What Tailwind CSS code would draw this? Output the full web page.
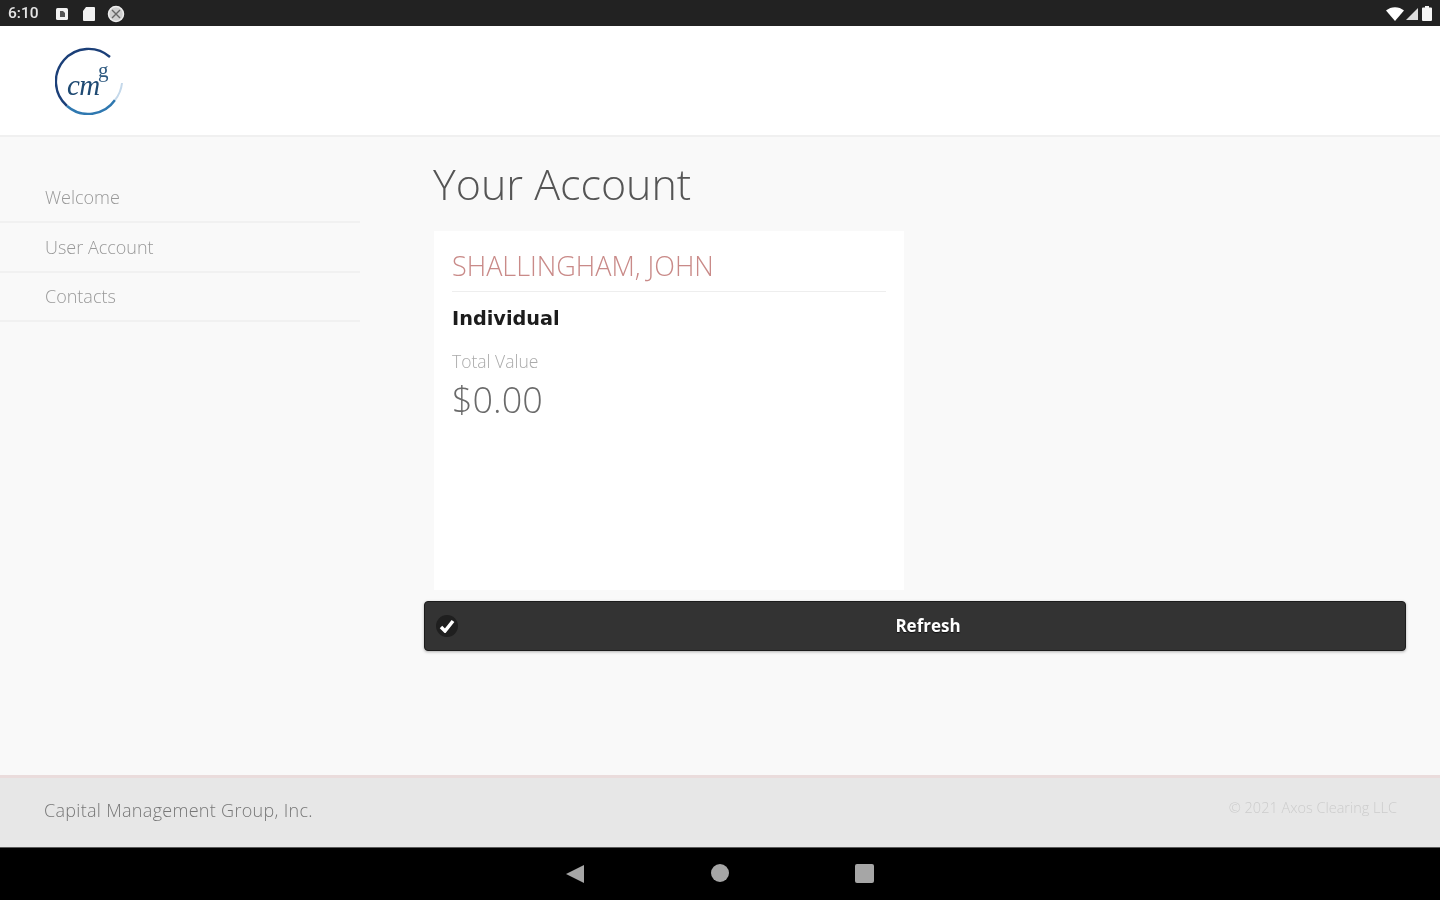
<!DOCTYPE html>
<html>
<head>
<meta charset="utf-8">
<script src="https://cdn.jsdelivr.net/npm/@tailwindcss/browser@4"></script>
</head>
<body class="m-0">
<div class="w-[1440px] h-[900px] flex flex-col overflow-hidden bg-[#f9f9f9] font-['Open_Sans',sans-serif] blur-[0.5px]">
  <!-- status bar -->
  <div class="h-[26px] bg-[#222222] shrink-0 flex items-center justify-between pl-[8px] pr-[8px]">
    <div class="flex items-center pt-[1px]">
      <span class="pt-[1px] text-[15.5px] leading-none text-[#e4e4e4] font-['Roboto',sans-serif] font-medium w-[40px]">6:10</span>
      <svg class="ml-[7px]" width="14" height="14" viewBox="0 0 14 14"><rect x="1" y="1" width="12" height="12" rx="1.5" fill="#f2f2f2"/><path d="M5 4h3l2 2v4H5z" fill="#555"/></svg>
      <svg class="ml-[13px]" width="14" height="16" viewBox="0 0 14 16"><path d="M4 1h8a1 1 0 0 1 1 1v12a1 1 0 0 1-1 1H2a1 1 0 0 1-1-1V5z" fill="#f2f2f2"/></svg>
      <svg class="ml-[11px]" width="18" height="18" viewBox="0 0 18 18"><circle cx="9" cy="9" r="7.500" fill="#cfcfcf" stroke="#eeeeee" stroke-width="1.500"/><path d="M5 5l8 8M13 5l-8 8" stroke="#666" stroke-width="1.400"/></svg>
    </div>
    <div class="flex items-center pt-[1px]">
      <svg width="18" height="14" viewBox="0 0 18 14"><path d="M0 3.500C5-1 13-1 18 3.500L9 14z" fill="#ffffff"/></svg>
      <svg class="ml-[1px]" width="14" height="14" viewBox="0 0 14 14"><path d="M13 1v12H1z" fill="#dddddd"/></svg>
      <svg class="ml-[3px]" width="10" height="15" viewBox="0 0 10 15"><path d="M3 0h4v1.500h2a1 1 0 0 1 1 1V14a1 1 0 0 1-1 1H1a1 1 0 0 1-1-1V2.500a1 1 0 0 1 1-1h2z" fill="#f6f6f6"/></svg>
    </div>
  </div>
  <!-- header -->
  <div class="h-[111px] bg-white shrink-0 border-b-2 border-[#f0f0f0] flex items-center pl-[55px]">
    <svg width="68" height="68" viewBox="0 0 68 68">
      <path d="M55 10A32.500 32.500 0 0 0 12 59" fill="none" stroke="#1b3f78" stroke-width="2.400"/>
      <path d="M12 59A32.500 32.500 0 0 0 60 53" fill="none" stroke="#2f78b0" stroke-width="2.400"/>
      <path d="M60 53A32.500 32.500 0 0 0 67 36" fill="none" stroke="#c4d8ea" stroke-width="2"/>
      <text x="12" y="48" font-family="Liberation Serif" font-style="italic" font-size="29" fill="#1f4a73" letter-spacing="-0.5">cm</text>
      <text x="43" y="30" font-family="Liberation Serif" font-size="21" fill="#2f5a80">g</text>
    </svg>
  </div>
  <!-- main -->
  <div class="flex-1 flex min-h-0">
    <nav class="w-[360px] shrink-0 pt-[36px] text-[18px] font-light text-[#999999]">
      <div class="h-[50px] flex items-center pl-[45px] border-b-2 border-[#f1f1f1]">Welcome</div>
      <div class="h-[50px] flex items-center pl-[45px] border-b-2 border-[#f1f1f1]">User Account</div>
      <div class="h-[49px] flex items-center pl-[45px] border-b-2 border-[#f1f1f1]">Contacts</div>
    </nav>
    <main class="flex-1 pl-[64px] pr-[34px] min-w-0">
      <h1 class="ml-[9px] mt-[21px] h-[52px] text-[43px] leading-[52px] font-light text-[#555555]">Your Account</h1>
      <div class="ml-[10px] mt-[21px] w-[470px] h-[359px] bg-white px-[18px] pt-[17px]">
        <div class="h-[44px] border-b border-[#eeeeee] text-[27px] leading-[36px] font-light text-[#c98a88]">SHALLINGHAM, JOHN</div>
        <div class="mt-[13px] text-[19.300px] leading-[28px] font-bold text-[#1c1c1c] font-['DejaVu_Sans',sans-serif]">Individual</div>
        <div class="mt-[17px] text-[17.500px] leading-[22px] font-light text-[#aaaaaa]">Total Value</div>
        <div class="mt-[6px] text-[36px] leading-[44px] font-light text-[#6a6a6a]">$0.00</div>
      </div>
      <button class="relative mt-[11px] w-full h-[50px] bg-[#333333] border border-[#1c1c1c] rounded-[4px] shadow-[0_1px_3px_rgba(0,0,0,0.3)] flex items-center justify-center text-white text-[17px] font-bold [text-shadow:0_1px_1px_#111]">
        <span class="absolute left-[11px] top-[13px] w-[22px] h-[22px] rounded-full bg-[#1f1f1f] flex items-center justify-center">
          <svg width="16" height="14" viewBox="0 0 16 14"><path d="M2 8l4 4 8-10" fill="none" stroke="#ffffff" stroke-width="3.500"/></svg>
        </span>
        <span class="ml-[26px]">Refresh</span>
      </button>
    </main>
  </div>
  <!-- footer -->
  <div class="h-[72px] shrink-0 bg-[#e7e7e7] border-t-[3px] border-[#eadcdc] flex justify-between pl-[44px] pr-[43px]">
    <span class="text-[18px] font-light text-[#777777] mt-[19px] leading-[26px] tracking-[0.3px]">Capital Management Group, Inc.</span>
    <span class="text-[14.500px] font-light text-[#cccccc] mt-[20px] leading-[20px]">© 2021 Axos Clearing LLC</span>
  </div>
  <!-- nav bar -->
  <div class="h-[53px] shrink-0 bg-black relative border-t border-[#9a9a9a]/60">
    <svg class="absolute left-[566px] top-[16px]" width="20" height="20" viewBox="0 0 20 20"><path d="M0 10L18 1v18z" fill="#a6a6a6"/></svg>
    <svg class="absolute left-[711px] top-[16px]" width="18" height="18" viewBox="0 0 18 18"><circle cx="9" cy="9" r="9" fill="#a6a6a6"/></svg>
    <svg class="absolute left-[855px] top-[16px]" width="19" height="19" viewBox="0 0 19 19"><rect width="19" height="19" rx="2" fill="#a6a6a6"/></svg>
  </div>
</div>
</body>
</html>
